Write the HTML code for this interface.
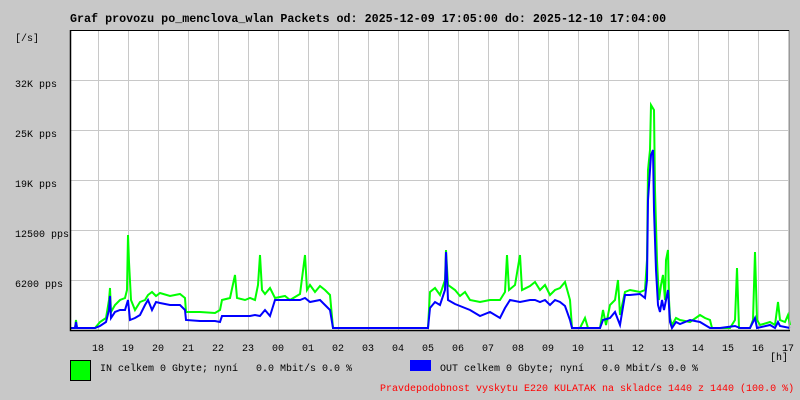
<!DOCTYPE html>
<html><head><meta charset="utf-8"><style>
html,body{margin:0;padding:0;background:#c8c8c8;width:800px;height:400px;overflow:hidden}
svg{display:block}
text{font-family:"Liberation Mono","DejaVu Sans Mono",monospace;font-size:10px;fill:#000;white-space:pre}
</style></head><body>
<svg width="800" height="400" xmlns="http://www.w3.org/2000/svg" xml:space="preserve">
<rect x="0" y="0" width="800" height="400" fill="#c8c8c8"/>
<rect x="70" y="30" width="720" height="300" fill="#fff"/>
<g stroke="#c8c8c8" stroke-width="1">
<path d="M98.5 30V330M128.5 30V330M158.5 30V330M188.5 30V330M218.5 30V330M248.5 30V330M278.5 30V330M308.5 30V330M338.5 30V330M368.5 30V330M398.5 30V330M428.5 30V330M458.5 30V330M488.5 30V330M518.5 30V330M548.5 30V330M578.5 30V330M608.5 30V330M638.5 30V330M668.5 30V330M698.5 30V330M728.5 30V330M758.5 30V330M788.5 30V330"/>
<path d="M70 80.5H790M70 130.5H790M70 180.5H790M70 230.5H790M70 280.5H790"/>
</g>
<polyline fill="none" stroke="#00ff00" stroke-width="2" points="70,328 75,328 76,320 77,328 95,328 100,322 106,318 109,300 110,288 111,312 115,305 120,300 125,298 127,290 128,235 129,262 131,300 135,310 140,302 145,300 148,295 152,292 156,296 160,293 170,296 180,294 185,298 186,312 200,312 215,313 220,310 222,300 230,298 235,275 237,298 245,300 250,298 255,300 258,285 260,255 262,290 265,294 270,288 275,298 285,296 290,300 300,294 305,255 307,290 310,285 315,292 320,286 325,290 330,295 333,328 428,328 430,292 435,288 440,295 445,280 446,250 448,285 455,290 460,296 465,292 470,300 480,302 490,300 500,300 505,292 507,255 509,290 515,285 520,255 522,290 530,286 535,282 540,290 545,285 550,295 555,290 560,288 565,282 570,300 572,328 580,328 585,318 588,328 600,328 603,310 606,325 610,305 615,300 618,280 620,315 625,292 630,290 640,292 645,290 647,260 648,170 650,150 651,105 654,110 655,190 657,260 659,300 661,285 663,275 665,300 666,260 668,250 669,300 670,318 672,325 676,318 680,320 690,322 700,315 705,318 710,320 712,328 730,328 735,320 737,268 739,328 750,328 753,320 755,252 757,320 760,325 770,322 775,325 778,302 780,320 785,322 788,315 790,325"/>
<polyline fill="none" stroke="#0000ff" stroke-width="2" points="70,328 75,328 76,322 77,328 95,328 100,326 106,322 109,310 110,296 111,318 115,312 120,310 125,310 128,300 130,320 135,318 140,315 145,305 148,300 152,310 156,302 160,303 170,305 180,305 185,310 186,320 200,321 215,321 220,322 222,316 230,316 240,316 250,316 255,315 260,316 265,310 270,316 275,300 285,300 290,300 300,300 305,298 310,302 320,300 325,305 330,310 333,328 428,328 430,308 435,302 440,305 445,290 446,252 448,300 455,304 460,306 465,308 470,310 480,316 490,312 500,318 505,308 510,300 520,302 530,300 535,300 540,302 545,300 550,305 555,300 560,302 565,306 570,320 572,328 600,328 603,320 610,318 615,312 620,325 625,295 630,295 640,294 645,298 647,280 648,200 650,170 651,155 653,150 654,210 656,270 658,305 660,312 662,300 664,310 666,300 668,290 670,322 672,328 676,322 680,324 690,320 700,322 705,325 710,328 720,328 735,326 740,328 750,328 755,318 757,328 770,325 775,328 778,322 780,326 790,328"/>
<path d="M70.5 30V330.5H790" fill="none" stroke="#000" stroke-width="1.5"/>
<path d="M70 30.5H790" stroke="#000" stroke-width="1"/>
<path d="M789.5 30V330" stroke="#999" stroke-width="1"/>
<text x="70" y="22" style="font-size:11.7px;font-weight:bold">Graf provozu po_menclova_wlan Packets od: 2025-12-09 17:05:00 do: 2025-12-10 17:04:00</text>
<text x="15" y="41">[/s]</text>
<text x="15" y="87">32K pps</text>
<text x="15" y="137">25K pps</text>
<text x="15" y="187">19K pps</text>
<text x="15" y="237">12500 pps</text>
<text x="15" y="287">6200 pps</text>
<g text-anchor="middle">
<text x="98" y="351">18</text><text x="128" y="351">19</text><text x="158" y="351">20</text><text x="188" y="351">21</text><text x="218" y="351">22</text><text x="248" y="351">23</text><text x="278" y="351">00</text><text x="308" y="351">01</text><text x="338" y="351">02</text><text x="368" y="351">03</text><text x="398" y="351">04</text><text x="428" y="351">05</text><text x="458" y="351">06</text><text x="488" y="351">07</text><text x="518" y="351">08</text><text x="548" y="351">09</text><text x="578" y="351">10</text><text x="608" y="351">11</text><text x="638" y="351">12</text><text x="668" y="351">13</text><text x="698" y="351">14</text><text x="728" y="351">15</text><text x="758" y="351">16</text><text x="788" y="351">17</text>
</g>
<text x="770" y="360">[h]</text>
<rect x="70.5" y="360.5" width="20" height="20" fill="#00ff00" stroke="#000" stroke-width="1"/>
<text x="100" y="371">IN celkem 0 Gbyte; nyní   0.0 Mbit/s 0.0 %</text>
<rect x="410" y="360" width="21" height="11" fill="#0000ff"/>
<text x="440" y="371">OUT celkem 0 Gbyte; nyní   0.0 Mbit/s 0.0 %</text>
<text x="380" y="391" style="fill:#ff0000">Pravdepodobnost vyskytu E220 KULATAK na skladce 1440 z 1440 (100.0 %)</text>
</svg>
</body></html>
